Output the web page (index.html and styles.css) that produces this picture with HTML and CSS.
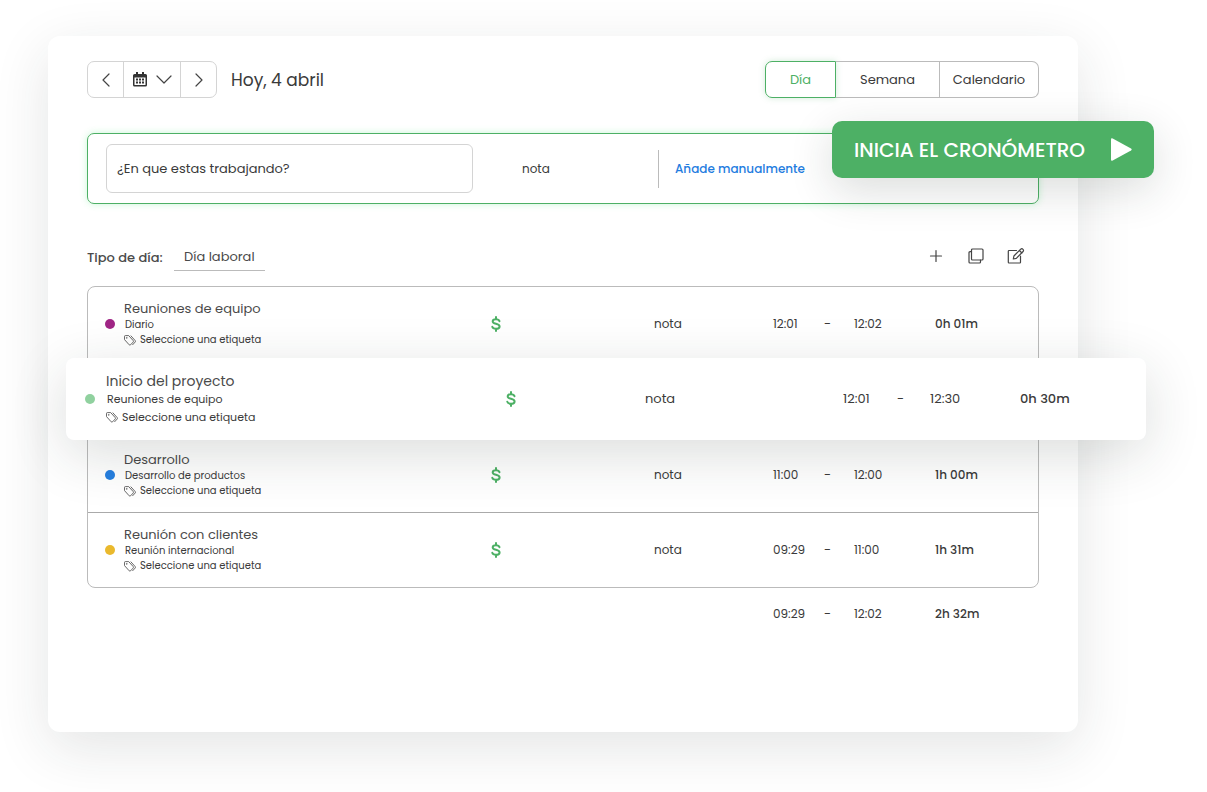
FILE: index.html
```html
<!DOCTYPE html>
<html lang="es">
<head>
    <meta charset="UTF-8">
    <meta name="viewport" content="width=device-width, initial-scale=1.0">
    <title>Registro de tiempo</title>
    <link rel="stylesheet" href="styles.css">
</head>
<body>
    <svg class="sprite" aria-hidden="true">
        <symbol id="tag" viewBox="0 0 12 11">
            <path d="M.5 1.500v3.100l4.700 5.200q.7.700 1.400 0L9.200 7q.6-.7 0-1.400L4.700.6H1.400q-.9 0-.9.900z"/>
            <path d="M6.700.6l4.500 5q.6.700 0 1.400L8.400 10"/>
            <circle cx="2.800" cy="2.900" r=".4"/>
        </symbol>
        <symbol id="dollar" viewBox="0 0 10 16">
            <path d="M5 1v2M5 13v2M8.500 5.200C8 3.800 6.800 3.200 5 3.200 3 3.200 1.700 4.100 1.700 5.500 1.700 8.400 8.600 7.200 8.600 10.400 8.600 11.900 7.100 12.800 5 12.800 3 12.800 1.700 12.200 1.300 10.800"/>
        </symbol>
    </svg>

    <main class="panel">
        <header class="topbar">
            <div class="date-nav">
                <button type="button" aria-label="Día anterior">
                    <svg class="icon" width="8" height="14" viewBox="0 0 8 14"><path d="M7 1L1 7l6 6"/></svg>
                </button>
                <button type="button" class="picker" aria-label="Elegir fecha">
                    <svg width="14" height="15" viewBox="0 0 14 15" fill="#333">
                        <path fill-rule="evenodd" d="M3 0h2v2h4V0h2v2h1.500Q14 2 14 3.500v9.500q0 1.500-1.500 1.500h-11Q0 14.500 0 13V3.500Q0 2 1.500 2H3zM1.500 5.500V13h11V5.500z"/>
                        <path d="M3 6.500h2v2H3zM6 6.500h2v2H6zM9 6.500h2v2H9zM3 9.500h2v2H3zM6 9.500h2v2H6zM9 9.500h2v2H9z"/>
                    </svg>
                    <svg class="icon" width="16" height="9" viewBox="0 0 16 9"><path d="M1 1l7 7 7-7"/></svg>
                </button>
                <button type="button" aria-label="Día siguiente">
                    <svg class="icon" width="8" height="14" viewBox="0 0 8 14"><path d="M1 1l6 6-6 6"/></svg>
                </button>
            </div>
            <h1>Hoy, 4 abril</h1>
            <div class="views">
                <button type="button" class="active">Día</button>
                <button type="button">Semana</button>
                <button type="button">Calendario</button>
            </div>
        </header>

        <section class="tracker">
            <input type="text" class="task-input" placeholder="¿En que estas trabajando?" aria-label="¿En que estas trabajando?">
            <span class="tracker-note">nota</span>
            <a href="#" class="manual">Añade manualmente</a>
            <button type="button" class="start">
                INICIA EL CRONÓMETRO
                <svg width="21" height="23" viewBox="0 0 21 23"><path fill="#fff" d="M0 1.500Q0-.3 1.700.5L20 10.500q1.400 1 0 2L1.700 22.500Q0 23.300 0 21.500z"/></svg>
            </button>
        </section>

        <section class="day-bar">
            <span class="day-label">Tipo de día:</span>
            <button type="button" class="day-type">Día laboral</button>
            <div class="actions">
                <button type="button" aria-label="Añadir">
                    <svg class="icon" width="18" height="18" viewBox="0 0 18 18"><path d="M9 3.500v11M3.500 9h11"/></svg>
                </button>
                <button type="button" aria-label="Duplicar">
                    <svg class="icon" width="18" height="18" viewBox="0 0 18 18"><rect x="4.500" y="2" width="11.500" height="11" rx="1"/><path d="M4.500 4.700H3q-1 0-1 1V15q0 1 1 1h9.500q1 0 1-1v-2"/></svg>
                </button>
                <button type="button" aria-label="Editar">
                    <svg class="icon" width="18" height="18" viewBox="0 0 18 18"><path d="M9.500 3.500H2q-.7 0-.7.700v11q0 .8.700.8h10.800q.7 0 .7-.8V9"/><path d="M6.300 12l.6-3 6.800-6.800q1.200-1 2.300.1 1 1 .1 2.200L9.300 11.300zM12.400 3.500l2.500 2.500"/></svg>
                </button>
            </div>
        </section>

        <section class="entries">
            <article class="entry">
                <span class="dot purple"></span>
                <div class="info">
                    <h2>Reuniones de equipo</h2>
                    <p>Diario</p>
                    <button type="button" class="tag"><svg><use href="#tag"/></svg>Seleccione una etiqueta</button>
                </div>
                <svg class="dollar"><use href="#dollar"/></svg>
                <span class="note">nota</span>
                <time>12:01</time><span class="dash">-</span><time>12:02</time>
                <strong>0h 01m</strong>
            </article>
            <article class="entry featured">
                <span class="dot green"></span>
                <div class="info">
                    <h2>Inicio del proyecto</h2>
                    <p>Reuniones de equipo</p>
                    <button type="button" class="tag"><svg><use href="#tag"/></svg>Seleccione una etiqueta</button>
                </div>
                <svg class="dollar"><use href="#dollar"/></svg>
                <span class="note">nota</span>
                <time>12:01</time><span class="dash">-</span><time>12:30</time>
                <strong>0h 30m</strong>
            </article>
            <article class="entry">
                <span class="dot blue"></span>
                <div class="info">
                    <h2>Desarrollo</h2>
                    <p>Desarrollo de productos</p>
                    <button type="button" class="tag"><svg><use href="#tag"/></svg>Seleccione una etiqueta</button>
                </div>
                <svg class="dollar"><use href="#dollar"/></svg>
                <span class="note">nota</span>
                <time>11:00</time><span class="dash">-</span><time>12:00</time>
                <strong>1h 00m</strong>
            </article>
            <article class="entry last">
                <span class="dot yellow"></span>
                <div class="info">
                    <h2>Reunión con clientes</h2>
                    <p>Reunión internacional</p>
                    <button type="button" class="tag"><svg><use href="#tag"/></svg>Seleccione una etiqueta</button>
                </div>
                <svg class="dollar"><use href="#dollar"/></svg>
                <span class="note">nota</span>
                <time>09:29</time><span class="dash">-</span><time>11:00</time>
                <strong>1h 31m</strong>
            </article>
        </section>

        <footer class="entry total">
            <time>09:29</time><span class="dash">-</span><time>12:02</time>
            <strong>2h 32m</strong>
        </footer>
    </main>
</body>
</html>
```

FILE: styles.css
```css
* {
    box-sizing: border-box;
}
body {
    margin: 0;
    padding: 36px 129px 60px 48px;
    background: #fff;
    color: #3a3a3a;
    font-family: Poppins, Inter, sans-serif;
    font-size: 13px;
}
button {
    padding: 0;
    border: none;
    background: none;
    color: inherit;
    font: inherit;
    cursor: pointer;
}
h1, h2, p {
    margin: 0;
    font-weight: 400;
}
.sprite {
    position: absolute;
    width: 0;
    height: 0;
}
.icon {
    fill: none;
    stroke: #444;
    stroke-width: 1.2;
    stroke-linecap: round;
    stroke-linejoin: round;
}
.panel {
    padding: 25px 39px 99px;
    border-radius: 12px;
    background: #fff;
    box-shadow: 0 16px 56px rgba(30, 45, 40, 0.12);
}

/* top bar */
.topbar {
    display: flex;
    align-items: center;
}
.date-nav {
    display: flex;
    height: 37px;
    border: 1px solid #d4d4d4;
    border-radius: 7px;
}
.date-nav button {
    display: flex;
    align-items: center;
    justify-content: center;
    gap: 9px;
    width: 35px;
}
.date-nav .picker {
    width: 58px;
    border: solid #d4d4d4;
    border-width: 0 1px;
}
h1 {
    margin-left: 14px;
    font-size: 17px;
}
.views {
    display: flex;
    height: 37px;
    margin-left: auto;
}
.views button {
    width: 99px;
    border: 1px solid #bbb;
    border-left: none;
}
.views button:nth-child(2) {
    width: 104px;
}
.views button:last-child {
    border-radius: 0 7px 7px 0;
}
.views .active {
    width: 71px;
    border: 1px solid #4db065;
    border-radius: 7px 0 0 7px;
    color: #4db065;
    box-shadow: 0 0 6px rgba(77, 176, 101, 0.25);
}

/* tracker */
.tracker {
    position: relative;
    display: flex;
    align-items: center;
    height: 71px;
    margin-top: 35px;
    padding-left: 18px;
    border: 1px solid #4db065;
    border-radius: 7px;
    box-shadow: 0 0 7px rgba(77, 230, 120, 0.3);
}
.task-input {
    width: 367px;
    height: 49px;
    padding: 0 10px;
    border: 1px solid #d4d4d4;
    border-radius: 6px;
    color: #3a3a3a;
    font: inherit;
}
.task-input::placeholder {
    color: #3a3a3a;
    opacity: 1;
}
.tracker-note {
    width: 185px;
    padding-left: 49px;
    font-size: 12px;
}
.manual {
    padding: 10px 16px;
    border-left: 1px solid #bbb;
    color: #1f7de0;
    font-size: 12px;
    font-weight: 500;
    text-decoration: none;
}
.start {
    position: absolute;
    top: -13px;
    right: -116px;
    display: flex;
    align-items: center;
    justify-content: space-between;
    width: 322px;
    height: 57px;
    padding: 0 22px;
    border-radius: 10px;
    background: #4db065;
    color: #fff;
    font-size: 20px;
    font-weight: 500;
    white-space: nowrap;
    box-shadow: 0 12px 44px rgba(30, 45, 40, 0.16);
}

/* day type */
.day-bar {
    display: flex;
    align-items: center;
    height: 27px;
    margin-top: 40px;
    color: #4a4a4a;
}
.day-label {
    width: 87px;
    font-weight: 500;
    white-space: nowrap;
}
.day-type {
    height: 27px;
    padding: 0 10px;
    border-bottom: 1px solid #bbb;
}
.actions {
    display: flex;
    gap: 22px;
    margin-left: auto;
    padding: 0 14px 4px 0;
}
.actions svg {
    display: block;
}

/* entries */
.entries {
    margin-top: 15px;
    border: 1px solid #bbb;
    border-radius: 8px;
}
.entry {
    display: grid;
    grid-template-columns: 19px 367px 163px 119px 51px 30px 81px 103px;
    align-items: center;
    justify-content: end;
    height: 74px;
}
.entry.last {
    height: 75px;
    border-top: 1px solid #aaa;
}
.dot {
    width: 10px;
    height: 10px;
    border-radius: 50%;
}
.purple {
    background: #a02585;
}
.green {
    background: #90d19f;
}
.blue {
    background: #267fe0;
}
.yellow {
    background: #eab92d;
}
.info h2 {
    color: #4a4a4a;
    font-size: 13px;
    line-height: 18px;
}
.info p {
    padding-left: 1px;
    font-size: 10px;
    line-height: 14px;
}
.tag {
    display: flex;
    align-items: center;
    gap: 4px;
    font-size: 10px;
    line-height: 16px;
}
.tag svg {
    width: 12px;
    height: 11px;
    fill: none;
    stroke: #444;
    stroke-width: 0.8;
}
.dollar {
    width: 10px;
    height: 16px;
    fill: none;
    stroke: #4db065;
    stroke-width: 2;
    stroke-linecap: round;
}
.entry time, .note {
    font-size: 12px;
}
.entry strong {
    font-size: 12px;
    font-weight: 500;
}
.featured {
    position: relative;
    grid-template-columns: 21px 400px 139px 198px 54px 33px 90px 126px;
    height: 82px;
    margin: -3px -108px -2px -22px;
    border-radius: 8px;
    background: #fff;
    box-shadow: 0 14px 56px rgba(30, 45, 40, 0.16);
}
.featured h2 {
    font-size: 14px;
}
.featured p, .featured .tag {
    font-size: 11px;
    line-height: 18px;
}
.featured time, .featured .note, .featured strong {
    font-size: 13px;
}
.total {
    height: 38px;
    margin-top: 7px;
    grid-template-columns: 51px 30px 81px 104px;
}
```
